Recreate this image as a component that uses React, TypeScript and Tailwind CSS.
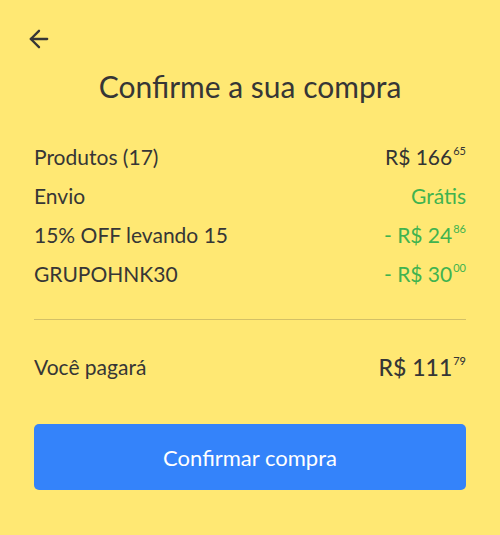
import { ArrowLeft } from "lucide-react"

type Row = { label: string; value: React.ReactNode }

function Price({ whole, cents, prefix = "" }: { whole: string; cents: string; prefix?: string }) {
  return (
    <span className="inline-flex items-start leading-none">
      <span>{prefix}R$ {whole}</span>
      <span className="text-[11px] ml-[1px] -mt-[1px]">{cents}</span>
    </span>
  )
}

export default function App() {
  const rows: Row[] = [
    { label: "Produtos (17)", value: <span className="text-[#333333]"><Price whole="166" cents="65" /></span> },
    { label: "Envio", value: <span className="text-[#3fb34f]">Grátis</span> },
    { label: "15% OFF levando 15", value: <span className="text-[#3fb34f]"><Price prefix="- " whole="24" cents="86" /></span> },
    { label: "GRUPOHNK30", value: <span className="text-[#3fb34f]"><Price prefix="- " whole="30" cents="00" /></span> },
  ]

  return (
    <div
      className="w-[500px] h-[535px] bg-[#ffe873] text-[#363636] px-[34px] flex flex-col"
      style={{ fontFamily: "Lato, 'Open Sans', sans-serif" }}
    >
      <div className="pt-[25px] -ml-[9px]">
        <ArrowLeft size={28} strokeWidth={2} />
      </div>

      <h1 className="mt-[18px] text-center text-[30px] leading-none font-normal">
        Confirme a sua compra
      </h1>

      <div className="mt-[45px] flex flex-col gap-[17px]">
        {rows.map((r) => (
          <div key={r.label} className="flex justify-between items-center text-[21px] leading-[22px]">
            <span>{r.label}</span>
            {r.value}
          </div>
        ))}
      </div>

      <div className="mt-[34px] h-px bg-[#d3c066]" />

      <div className="mt-[35px] flex justify-between items-center">
        <span className="text-[21px] leading-[24px]">Você pagará</span>
        <span className="text-[23px] leading-[24px] font-medium">
          <Price whole="111" cents="79" />
        </span>
      </div>

      <button className="mt-[45px] h-[66px] w-full rounded-[5px] bg-[#3483fa] text-white text-[22px]">
        Confirmar compra
      </button>
    </div>
  )
}
